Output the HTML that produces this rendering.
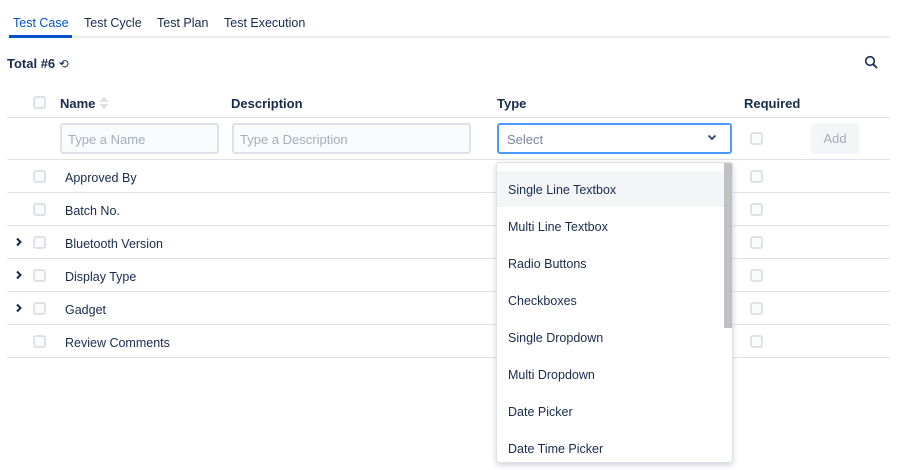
<!DOCTYPE html><html><head><style>
*{box-sizing:border-box;margin:0;padding:0}
body{width:900px;height:470px;background:#fff;font-family:"Liberation Sans",sans-serif;font-size:12.5px;color:#172b4d;position:relative;overflow:hidden}
.a{position:absolute}
.cb{position:absolute;width:13px;height:13px;border:2px solid #dfe1e6;border-radius:3px;background:#fafbfc}
.line{position:absolute;left:7px;width:883px;height:1px;background:#dfe1e6}
.inp{position:absolute;top:123px;height:31px;border:2px solid #dfe1e6;border-radius:3px;background:#fafbfc;color:#a5adba;padding:7px 6px 0;font-size:13px}
.hd{position:absolute;top:96px;font-weight:bold;font-size:13px}
.rt{position:absolute;left:65px;font-size:12.5px}
.dd{position:absolute;left:496px;top:162px;width:237px;height:301px;border:1px solid #dfe1e6;border-radius:3px;background:#fff;box-shadow:0 2px 6px rgba(9,30,66,.2);overflow:hidden}
.it{position:absolute;left:0;width:228px;height:36px;padding-left:11px;line-height:38px;font-size:12.5px}
</style></head><body>
<div class="a" style="left:13px;top:16px;color:#0052cc;font-size:12.5px">Test Case</div>
<div class="a" style="left:84px;top:16px">Test Cycle</div>
<div class="a" style="left:157px;top:16px">Test Plan</div>
<div class="a" style="left:224px;top:16px">Test Execution</div>
<div class="a" style="left:7px;top:36px;width:883px;height:2px;background:#ebecf0"></div>
<div class="a" style="left:9px;top:35px;width:63px;height:3px;background:#0052cc"></div>
<div class="a" style="left:7px;top:56px;font-weight:bold;font-size:13px">Total #6 <span style="font-weight:normal;font-size:12px">⟲</span></div>
<svg class="a" style="left:864px;top:55px" width="15" height="15" viewBox="0 0 15 15"><circle cx="6" cy="6" r="4.3" fill="none" stroke="#172b4d" stroke-width="1.6"/><line x1="9.2" y1="9.2" x2="13" y2="13" stroke="#172b4d" stroke-width="1.8"/></svg>
<div class="cb" style="left:33px;top:96px"></div>
<div class="hd" style="left:60px">Name</div>
<svg class="a" style="left:98px;top:96px" width="12" height="14"><path d="M1 6L6 1L11 6Z M1 8L6 13L11 8Z" fill="#dfe1e6"/></svg>
<div class="hd" style="left:231px">Description</div>
<div class="hd" style="left:497px">Type</div>
<div class="hd" style="left:744px">Required</div>
<div class="line" style="top:117px"></div>
<div class="inp" style="left:60px;width:159px">Type a Name</div>
<div class="inp" style="left:232px;width:239px">Type a Description</div>
<div class="inp" style="left:497px;width:235px;border-color:#4c9aff;background:#fff;color:#7a869a;padding-left:8px">Select</div>
<svg class="a" style="left:707px;top:134px" width="10" height="8"><path d="M1.5 1.5L5 5L8.5 1.5" fill="none" stroke="#42526e" stroke-width="2"/></svg>
<div class="cb" style="left:750px;top:132px"></div>
<div class="a" style="left:811px;top:123px;width:48px;height:31px;background:#f4f5f7;border-radius:3px;color:#a5adba;text-align:center;line-height:32px;font-size:13px">Add</div>
<div class="line" style="top:159px"></div>
<div class="line" style="top:192px"></div><div class="line" style="top:225px"></div><div class="line" style="top:258px"></div><div class="line" style="top:291px"></div><div class="line" style="top:324px"></div><div class="line" style="top:357px"></div>
<div class="cb" style="left:33px;top:170px"></div><div class="rt" style="top:171px">Approved By</div>
<div class="cb" style="left:33px;top:203px"></div><div class="rt" style="top:204px">Batch No.</div>
<div class="cb" style="left:33px;top:236px"></div><div class="rt" style="top:237px">Bluetooth Version</div>
<div class="cb" style="left:33px;top:269px"></div><div class="rt" style="top:270px">Display Type</div>
<div class="cb" style="left:33px;top:302px"></div><div class="rt" style="top:303px">Gadget</div>
<div class="cb" style="left:33px;top:335px"></div><div class="rt" style="top:336px">Review Comments</div>
<svg class="a" style="left:15px;top:237px" width="8" height="10"><path d="M2 1.5L5.5 5L2 8.5" fill="none" stroke="#172b4d" stroke-width="2"/></svg>
<svg class="a" style="left:15px;top:270px" width="8" height="10"><path d="M2 1.5L5.5 5L2 8.5" fill="none" stroke="#172b4d" stroke-width="2"/></svg>
<svg class="a" style="left:15px;top:303px" width="8" height="10"><path d="M2 1.5L5.5 5L2 8.5" fill="none" stroke="#172b4d" stroke-width="2"/></svg>
<div class="cb" style="left:750px;top:170px"></div><div class="cb" style="left:750px;top:203px"></div><div class="cb" style="left:750px;top:236px"></div><div class="cb" style="left:750px;top:269px"></div><div class="cb" style="left:750px;top:302px"></div><div class="cb" style="left:750px;top:335px"></div>
<div class="dd">
<div class="it" style="top:8px;background:#f4f5f7">Single Line Textbox</div>
<div class="it" style="top:45px">Multi Line Textbox</div>
<div class="it" style="top:82px">Radio Buttons</div>
<div class="it" style="top:119px">Checkboxes</div>
<div class="it" style="top:156px">Single Dropdown</div>
<div class="it" style="top:193px">Multi Dropdown</div>
<div class="it" style="top:230px">Date Picker</div>
<div class="it" style="top:267px">Date Time Picker</div>
<div class="a" style="left:227px;top:0;width:8px;height:165px;background:#c1c1c1"></div>
</div>
</body></html>
